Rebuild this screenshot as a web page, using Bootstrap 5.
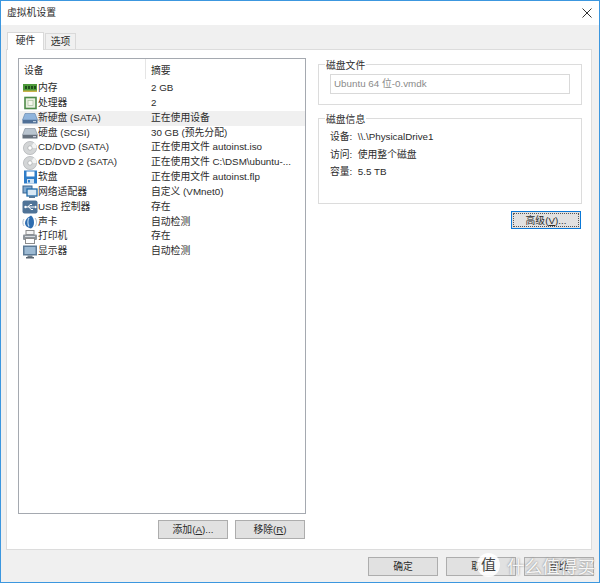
<!DOCTYPE html>
<html lang="zh"><head><meta charset="utf-8"><title>虚拟机设置</title>
<link href="https://cdn.jsdelivr.net/npm/bootstrap@5.3.0/dist/css/bootstrap.min.css" rel="stylesheet">
<style>
html,body{margin:0;height:583px;overflow:hidden;background:#f0f0f0}
body,.win,.win *{font-family:"Liberation Sans","Noto Sans CJK SC",sans-serif;font-size:9.8px;color:#2b2b2b}
.win{width:600px;height:583px;border:1px solid #3c97df;background:#f0f0f0;position:relative}
.ttl{height:24px;background:#fff;padding-left:6px;color:#333}
.ttl svg{margin-right:7px}
.tabstrip{height:24px;padding-left:6px;gap:1px}
.tabx{height:16px;width:31px;background:#f0f0f0;border:1px solid #d9d9d9;border-bottom:0;text-align:center;line-height:16px}
.tabx.on{height:18px;width:37px;background:#fff;margin-bottom:-1px;position:relative;z-index:1}
.panelx{height:501px;width:586px;margin-left:5px;background:#fff;border:1px solid #dcdcdc;padding:8px 0 0 11px;gap:12px}
.leftc{width:288px}
.devlist{height:456px;border:1px solid #a5a9b0;background:#fff}
.hdr{height:21px;line-height:23px}
.hdr>div,.rowx>div{padding-left:5px}
.hdr>div:first-child{width:127px;border-right:1px solid #e5e5e5;height:20px}
.rowx{height:14.85px;line-height:14.85px;white-space:nowrap;position:relative;top:1px}
.rowx.sel{background:#f0f0f0}
.rowx>div:first-child{width:128px;padding-left:3px;display:flex;align-items:center}
.rowx>div+div{padding-left:4px}
.rowx svg{width:16px;height:14px;flex:none}
.btnx{width:70px;height:19px;padding:0;border:1px solid #adadad;border-radius:0;background:#e1e1e1;line-height:17px;color:#2b2b2b}
.btnx:hover{background:#e1e1e1;border-color:#adadad}
.btnx.act{height:18px;border:1.5px solid #0a78d7;outline:1px dotted #555;outline-offset:-3px}
.listbtns{gap:7px;margin-top:6px;padding-right:1px}
.rightc{width:264px;margin-top:-1px}
.grp{border:1px solid #dcdcdc;margin:0;padding:0 11px;min-width:0}
.grp legend{float:none;width:auto;margin:0 0 0 -5px;padding:2px 1px 0;line-height:13px;font-size:9.8px}
.g1{height:48px}
.g2{height:93px;margin-top:6px;padding-top:2px}
.fld{height:20px;width:240px;border:1px solid #d9d9d9;margin-top:2px;padding:0 3px;color:#8a8a8a;line-height:18px}
.inf{height:17.5px;line-height:17.5px}
.advrow{margin-top:7px;padding-right:1px}
.foot{gap:8px;margin-top:7px;padding-right:5px}
.wmc{position:absolute;left:476px;top:552px;width:23px;height:24px;border-radius:50%;background:rgba(255,255,255,.88);text-align:center;line-height:23px;font-size:15px!important;color:#444!important}
.wmt{position:absolute;left:506px;top:554px;font-size:17.6px!important;line-height:24px;color:rgba(255,255,255,.92)!important;text-shadow:0 0 2px rgba(100,100,100,.85);white-space:nowrap}
</style></head><body>
<svg width="0" height="0" class="d-none">
<symbol id="i-mem" viewBox="0 0 16 14"><rect x="1" y="3" width="14" height="7" fill="#4d9a3a"/><rect x="1" y="9.500" width="14" height="1.500" fill="#c9b24a"/><path d="M3 5h2v3H3zM6 5h2v3H6zM9 5h2v3H9zM12 5h2v3h-2z" fill="#1f4d1c"/></symbol>
<symbol id="i-cpu" viewBox="0 0 16 14"><rect x="3" y="1.500" width="11" height="11" fill="#e8efe0" stroke="#4e8a48" stroke-width="1.600"/><rect x="6" y="4.500" width="5" height="5" fill="#f6f6ee" stroke="#a8c09c" stroke-width=".7"/></symbol>
<symbol id="i-hd" viewBox="0 0 16 14"><path d="M3 2.500h10l2.500 6.500H.5z" fill="#8fb4dc" stroke="#5b7ea6" stroke-width=".6"/><rect x=".5" y="9" width="15" height="3.500" fill="#4f6f96"/><rect x="11" y="10" width="3" height="1.200" fill="#bcd"/></symbol>
<symbol id="i-hd2" viewBox="0 0 16 14"><path d="M3 2.500h10l2.500 6.500H.5z" fill="#b9c4cf" stroke="#7d8894" stroke-width=".6"/><rect x=".5" y="9" width="15" height="3.500" fill="#66707c"/><rect x="11" y="10" width="3" height="1.200" fill="#ccd"/></symbol>
<symbol id="i-cd" viewBox="0 0 16 14"><circle cx="8" cy="7" r="6.600" fill="#d3d5d6" stroke="#a5a8ab" stroke-width=".6"/><path d="M8 7 12 1.500A6.600 6.600 0 0 1 14.600 7z" fill="#f2f3f3"/><circle cx="8" cy="7" r="2.200" fill="#fff" stroke="#9a9da0" stroke-width=".6"/></symbol>
<symbol id="i-fd" viewBox="0 0 16 14"><rect x="2" y="0.500" width="13" height="13" fill="#2f7dc8"/><rect x="4.500" y="1.500" width="8" height="5" fill="#fff"/><rect x="5" y="9" width="7" height="4.500" fill="#cfe2f3"/><rect x="6" y="10" width="2" height="2.500" fill="#2f7dc8"/></symbol>
<symbol id="i-net" viewBox="0 0 16 14"><rect x="1" y="1" width="9" height="7" fill="#7fa8cf" stroke="#3b648e"/><rect x="5" y="4" width="10" height="7" fill="#d9e9f6" stroke="#1f6aa8" stroke-width="1.300"/><rect x="7" y="11" width="6" height="2" fill="#557a9c"/></symbol>
<symbol id="i-usb" viewBox="0 0 16 14"><rect x=".5" y=".5" width="15" height="13" rx="2" fill="#4f7397"/><path d="M3 7h10M6 7l2-2.500h2M7 7l2 2.500h2" stroke="#fff" stroke-width="1" fill="none"/><circle cx="3.500" cy="7" r="1.200" fill="#fff"/><path d="m13 5.500 2 1.500-2 1.500z" fill="#fff"/></symbol>
<symbol id="i-snd" viewBox="0 0 16 14"><path d="M9 .5C5 3 3 5 3 8c0 3 3 5 6 5.500C13 12 13 3 9 .5z" fill="#2e6db0"/><path d="M7 3C5.500 5 5.500 9 7 11.500" stroke="#bcd8f0" stroke-width="1.200" fill="none"/><path d="M2 4C.5 6 .5 9 2 11M13 3c2 2.500 2 6 0 8.500" stroke="#9fb3c6" stroke-width=".9" fill="none"/></symbol>
<symbol id="i-prn" viewBox="0 0 16 14"><rect x="4" y=".5" width="8" height="4" fill="#f4f4f4" stroke="#8c8c8c"/><rect x="1" y="4.500" width="14" height="5.500" rx="1" fill="#8d949b"/><rect x="3.500" y="8.500" width="9" height="5" fill="#fff" stroke="#8c8c8c"/><rect x="3" y="6" width="10" height="1" fill="#d6d9dc"/></symbol>
<symbol id="i-mon" viewBox="0 0 16 14"><rect x="1" y=".5" width="14" height="10" fill="#5c7a96"/><rect x="2.500" y="2" width="11" height="7" fill="#9dbad3"/><rect x="5.500" y="10.500" width="5" height="1.500" fill="#73808c"/><rect x="4" y="12" width="8" height="1.500" fill="#5a6570"/></symbol>
</svg>
<div class="win">
 <div class="ttl d-flex align-items-center justify-content-between"><span>虚拟机设置</span>
  <svg width="10" height="10" viewBox="0 0 10 10"><path d="M.5.5l9 9M9.500.5l-9 9" stroke="#333" fill="none"/></svg></div>
 <div class="tabstrip d-flex align-items-end"><div class="tabx on">硬件</div><div class="tabx">选项</div></div>
 <div class="panelx d-flex">
  <div class="leftc">
   <div class="devlist">
    <div class="hdr d-flex"><div>设备</div><div>摘要</div></div>
    <div class="rowx d-flex"><div><svg><use href="#i-mem"/></svg>内存</div><div>2 GB</div></div>
    <div class="rowx d-flex"><div><svg><use href="#i-cpu"/></svg>处理器</div><div>2</div></div>
    <div class="rowx d-flex sel"><div><svg><use href="#i-hd"/></svg>新硬盘 (SATA)</div><div>正在使用设备</div></div>
    <div class="rowx d-flex"><div><svg><use href="#i-hd2"/></svg>硬盘 (SCSI)</div><div>30 GB (预先分配)</div></div>
    <div class="rowx d-flex"><div><svg><use href="#i-cd"/></svg>CD/DVD (SATA)</div><div>正在使用文件 autoinst.iso</div></div>
    <div class="rowx d-flex"><div><svg><use href="#i-cd"/></svg>CD/DVD 2 (SATA)</div><div>正在使用文件 C:\DSM\ubuntu-...</div></div>
    <div class="rowx d-flex"><div><svg><use href="#i-fd"/></svg>软盘</div><div>正在使用文件 autoinst.flp</div></div>
    <div class="rowx d-flex"><div><svg><use href="#i-net"/></svg>网络适配器</div><div>自定义 (VMnet0)</div></div>
    <div class="rowx d-flex"><div><svg><use href="#i-usb"/></svg>USB 控制器</div><div>存在</div></div>
    <div class="rowx d-flex"><div><svg><use href="#i-snd"/></svg>声卡</div><div>自动检测</div></div>
    <div class="rowx d-flex"><div><svg><use href="#i-prn"/></svg>打印机</div><div>存在</div></div>
    <div class="rowx d-flex"><div><svg><use href="#i-mon"/></svg>显示器</div><div>自动检测</div></div>
   </div>
   <div class="listbtns d-flex justify-content-end">
    <button class="btn btnx" type="button">添加(<u>A</u>)...</button>
    <button class="btn btnx" type="button">移除(<u>R</u>)</button>
   </div>
  </div>
  <div class="rightc">
   <fieldset class="grp g1"><legend>磁盘文件</legend><div class="fld">Ubuntu 64 位-0.vmdk</div></fieldset>
   <fieldset class="grp g2"><legend>磁盘信息</legend>
    <div class="inf">设备:&nbsp; \\.\PhysicalDrive1</div>
    <div class="inf">访问:&nbsp; 使用整个磁盘</div>
    <div class="inf">容量:&nbsp; 5.5 TB</div>
   </fieldset>
   <div class="advrow d-flex justify-content-end"><button class="btn btnx act" type="button">高级(<u>V</u>)...</button></div>
  </div>
 </div>
 <div class="foot d-flex justify-content-end">
  <button class="btn btnx" type="button">确定</button>
  <button class="btn btnx" type="button">取消</button>
  <button class="btn btnx" type="button">帮助</button>
 </div>
 <div class="wmc">值</div><div class="wmt">什么值得买</div>
</div>
</body></html>
